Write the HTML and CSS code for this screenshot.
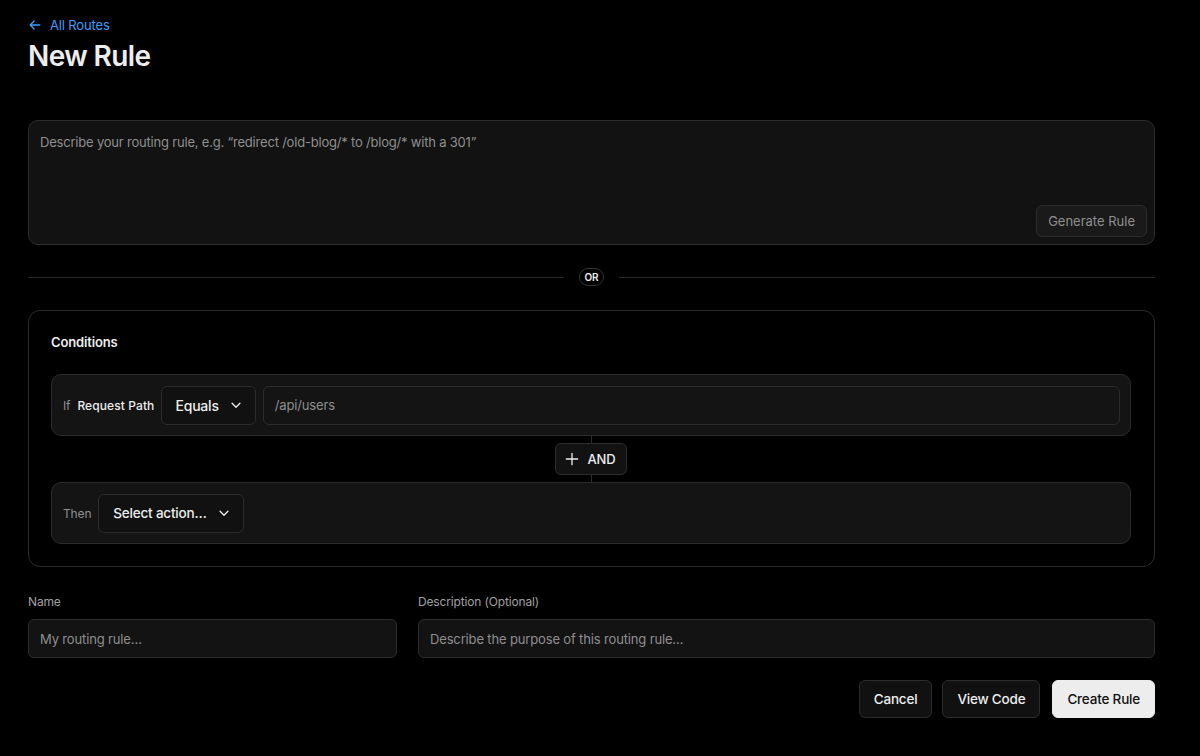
FILE: index.html
```html
<!DOCTYPE html>
<html lang="en">
<head>
    <meta charset="UTF-8">
    <meta name="viewport" content="width=device-width, initial-scale=1.0">
    <title>New Rule</title>
<link rel="stylesheet" href="styles.css">
</head>

<body>
    <div class="page">
        <a class="back-link" href="#">
            <svg width="14" height="14" viewBox="0 0 16 16" fill="none" stroke="currentColor" stroke-width="1.5" stroke-linecap="round" stroke-linejoin="round"><path d="M13.5 8H2.5M7 3.5L2.5 8L7 12.5"/></svg>
            All Routes
        </a>
        <h1 class="title">New Rule</h1>

        <div class="prompt-box">
            <div class="prompt-text">Describe your routing rule, e.g. “redirect /old-blog/* to /blog/* with a 301”</div>
            <div class="prompt-actions">
                <button class="btn-generate">Generate Rule</button>
            </div>
        </div>

        <div class="divider">
            <span class="divider-line"></span>
            <span class="divider-pill">OR</span>
            <span class="divider-line"></span>
        </div>

        <div class="conditions">
            <div class="conditions-title">Conditions</div>
            <div class="rule-row">
                <span class="row-label">If</span>
                <span class="row-field">Request Path</span>
                <button class="select select-equals">Equals
                    <svg width="14" height="14" viewBox="0 0 16 16" fill="none" stroke="currentColor" stroke-width="1.5" stroke-linecap="round" stroke-linejoin="round"><path d="M3.5 6L8 10.5L12.5 6"/></svg>
                </button>
                <div class="text-input">/api/users</div>
            </div>
            <div class="connector">
                <button class="btn-and">
                    <svg width="14" height="14" viewBox="0 0 16 16" fill="none" stroke="currentColor" stroke-width="1.5" stroke-linecap="round"><path d="M8 1.5V14.5M1.5 8H14.5"/></svg>
                    AND
                </button>
            </div>
            <div class="rule-row">
                <span class="row-label">Then</span>
                <button class="select select-action">Select action…
                    <svg width="14" height="14" viewBox="0 0 16 16" fill="none" stroke="currentColor" stroke-width="1.5" stroke-linecap="round" stroke-linejoin="round"><path d="M3.5 6L8 10.5L12.5 6"/></svg>
                </button>
            </div>
        </div>

        <div class="meta">
            <div class="field field-name">
                <label>Name</label>
                <div class="text-input">My routing rule…</div>
            </div>
            <div class="field field-desc">
                <label>Description (Optional)</label>
                <div class="text-input">Describe the purpose of this routing rule…</div>
            </div>
        </div>

        <div class="footer">
            <button class="btn">Cancel</button>
            <button class="btn">View Code</button>
            <button class="btn btn-primary">Create Rule</button>
        </div>
    </div>
</body>
</html>
```

FILE: styles.css
```css
body {
    margin: 0;
    background-color: #000;
    color: #ededed;
    font-family: Inter, "Noto Sans", sans-serif;
    letter-spacing: -0.15px;
}

button {
    font-family: inherit;
    letter-spacing: -0.2px;
    cursor: pointer;
}

.page {
    width: 1127px;
    margin-left: 28px;
    padding-top: 16px;
}

.back-link {
    display: flex;
    align-items: center;
    gap: 8px;
    color: #3b9eff;
    text-decoration: none;
    font-size: 13px;
    height: 18px;
}

.title {
    margin: 5px 0 0;
    font-size: 28px;
    font-weight: 600;
    letter-spacing: -0.6px;
    line-height: 34px;
}

.prompt-box {
    margin-top: 47px;
    height: 125px;
    box-sizing: border-box;
    background-color: #121212;
    border: 1px solid #2c2c2c;
    border-radius: 10px;
    padding: 13px 7px 7px 11px;
    display: flex;
    flex-direction: column;
}

.prompt-text {
    flex: 1;
    color: #8f8f8f;
    font-size: 13px;
    letter-spacing: -0.2px;
}

.prompt-actions {
    display: flex;
    justify-content: flex-end;
}

.btn-generate {
    background-color: #1a1a1a;
    border: 1px solid #2c2c2c;
    border-radius: 6px;
    color: #8f8f8f;
    font-size: 13px;
    height: 32px;
    padding: 0 11px;
    letter-spacing: 0;
}

.divider {
    display: flex;
    align-items: center;
    margin-top: 22px;
    height: 20px;
}

.divider-line {
    flex: 1;
    height: 1px;
    background-color: #262626;
}

.divider-pill {
    margin: 0 15px;
    font-size: 10px;
    font-weight: 600;
    color: #ededed;
    border: 1px solid #333;
    border-radius: 10px;
    padding: 2px 5px;
}

.conditions {
    margin-top: 23px;
    border: 1px solid #2c2c2c;
    border-radius: 12px;
    padding: 22px 23px 22px 22px;
}

.conditions-title {
    font-size: 13px;
    font-weight: 600;
    line-height: 18px;
    margin-bottom: 23px;
}

.rule-row {
    display: flex;
    align-items: center;
    gap: 7px;
    height: 62px;
    box-sizing: border-box;
    background-color: #141414;
    border: 1px solid #2c2c2c;
    border-radius: 10px;
    padding: 0 10px 0 11px;
}

.row-label {
    font-size: 12px;
    color: #8f8f8f;
}

.row-field {
    font-size: 12px;
    font-weight: 500;
    color: #ededed;
    letter-spacing: 0.1px;
}

.select {
    display: flex;
    align-items: center;
    gap: 10px;
    height: 39px;
    background-color: #111;
    border: 1px solid #2c2c2c;
    border-radius: 6px;
    color: #ededed;
    font-size: 14px;
    font-weight: 500;
    padding: 0 12px 0 13px;
}

.select-action {
    padding-left: 14px;
    font-size: 13.5px;
}

.text-input {
    flex: 1;
    display: flex;
    align-items: center;
    height: 39px;
    box-sizing: border-box;
    background-color: #141414;
    border: 1px solid #2c2c2c;
    border-radius: 6px;
    color: #8f8f8f;
    font-size: 13px;
    padding: 0 11px;
}

.connector {
    height: 46px;
    display: flex;
    align-items: center;
    justify-content: center;
    background: linear-gradient(#2c2c2c, #2c2c2c) no-repeat center / 1px 100%;
}

.btn-and {
    display: flex;
    align-items: center;
    gap: 9px;
    height: 32px;
    background-color: #121212;
    border: 1px solid #2c2c2c;
    border-radius: 6px;
    color: #ededed;
    font-size: 13px;
    font-weight: 500;
    padding: 0 11px 0 9px;
}

.meta {
    display: flex;
    gap: 21px;
    margin-top: 27px;
}

.field label {
    display: block;
    font-size: 12px;
    color: #a1a1a1;
    margin-bottom: 10px;
}

.field-name {
    width: 369px;
}

.field-desc {
    flex: 1;
}

.field .text-input {
    height: 39px;
    background-color: #131313;
}

.footer {
    display: flex;
    justify-content: flex-end;
    gap: 10px;
    margin-top: 22px;
}

.btn {
    height: 38px;
    background-color: #111;
    border: 1px solid #2c2c2c;
    border-radius: 6px;
    color: #ededed;
    font-size: 13.5px;
    font-weight: 500;
    padding: 0 14px;
}

.btn-primary {
    background-color: #ededed;
    border-color: #ededed;
    color: #111;
    margin-left: 2px;
}
```
